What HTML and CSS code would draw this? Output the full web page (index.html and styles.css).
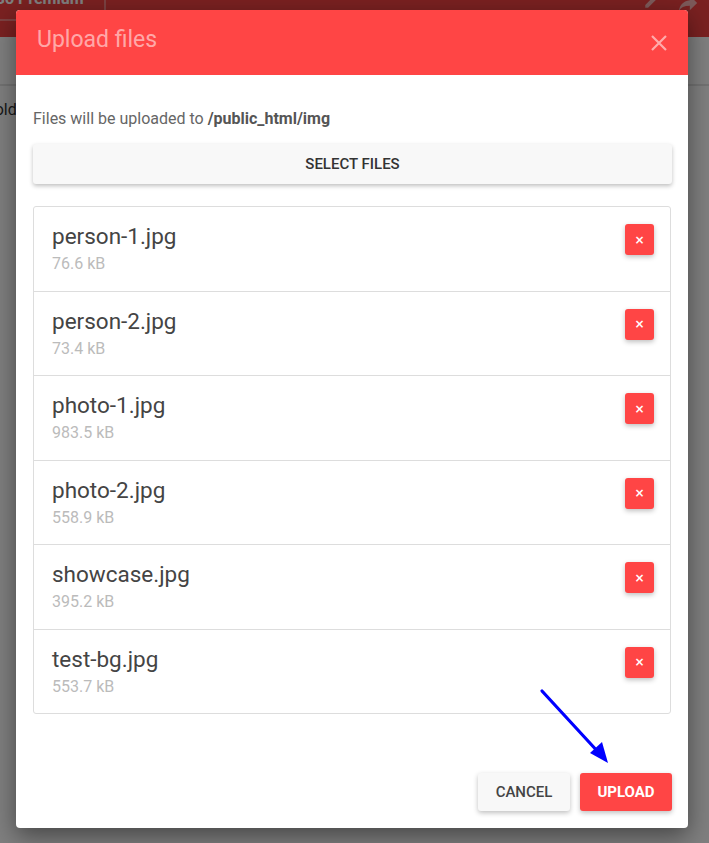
FILE: index.html
```html
<!DOCTYPE html>
<html>
<head>
<meta charset="utf-8">
<link rel="stylesheet" href="styles.css">
</head>
<body>
<div class="page">
  <div class="topbar">
    <div class="brand">Go Premium</div>
    <div class="top-icons">
      <svg width="18" height="18" viewBox="0 0 24 24"><path d="M3 17.25V21h3.75L17.81 9.94l-3.75-3.75L3 17.25zM20.71 7.04a1 1 0 0 0 0-1.41l-2.34-2.34a1 1 0 0 0-1.41 0l-1.83 1.83 3.75 3.75 1.83-1.83z" fill="#fff"/></svg>
      <svg width="26" height="22" viewBox="0 0 24 24"><path d="M14 4l8 8-8 8v-5c-6 0-10 2-12 6 1-6 4-11 12-12V4z" fill="#fff"/></svg>
    </div>
  </div>
  <div class="subbar"></div>
  <div class="content">
    <div class="folder">Folder</div>
  </div>
</div>

<div class="overlay">
  <div class="modal">
    <div class="modal-header">
      <div class="modal-title">Upload files</div>
      <svg class="close" width="18" height="18" viewBox="0 0 18 18"><path d="M2 2L16 16M16 2L2 16" stroke="rgba(255,255,255,0.55)" stroke-width="2.2" fill="none"/></svg>
    </div>
    <div class="modal-body">
      <p class="dest">Files will be uploaded to <b>/public_html/img</b></p>
      <button class="select-btn">SELECT FILES</button>
      <ul class="files">
        <li class="file"><div class="info"><div class="name">person-1.jpg</div><div class="size">76.6 kB</div></div><button class="remove">×</button></li>
        <li class="file"><div class="info"><div class="name">person-2.jpg</div><div class="size">73.4 kB</div></div><button class="remove">×</button></li>
        <li class="file"><div class="info"><div class="name">photo-1.jpg</div><div class="size">983.5 kB</div></div><button class="remove">×</button></li>
        <li class="file"><div class="info"><div class="name">photo-2.jpg</div><div class="size">558.9 kB</div></div><button class="remove">×</button></li>
        <li class="file"><div class="info"><div class="name">showcase.jpg</div><div class="size">395.2 kB</div></div><button class="remove">×</button></li>
        <li class="file"><div class="info"><div class="name">test-bg.jpg</div><div class="size">553.7 kB</div></div><button class="remove">×</button></li>
      </ul>
      <div class="footer">
        <button class="btn cancel">CANCEL</button>
        <button class="btn upload">UPLOAD</button>
      </div>
    </div>
  </div>
  <svg class="arrow" width="709" height="843" viewBox="0 0 709 843">
    <line x1="542" y1="691" x2="600" y2="754" stroke="#0000ff" stroke-width="3.2" stroke-linecap="round"/>
    <polygon points="608,763 590,753 602,742" fill="#0000ff"/>
  </svg>
</div>
</body>
</html>
```

FILE: styles.css
```css
html, body {
  margin: 0;
  padding: 0;
}
body {
  width: 709px;
  height: 843px;
  overflow: hidden;
  font-family: Roboto, "Liberation Sans", sans-serif;
  background: #fff;
  position: relative;
}
.page {
  display: flex;
  flex-direction: column;
  height: 843px;
}
.topbar {
  height: 37px;
  background: #f44343;
  display: flex;
  justify-content: space-between;
  align-items: flex-start;
}
.brand {
  margin-top: -12px;
  margin-left: -6px;
  width: 112px;
  height: 33px;
  border-right: 2px solid rgba(255,255,255,0.35);
  border-bottom: 2px solid rgba(255,255,255,0.35);
  color: #fff;
  font-weight: 700;
  font-size: 16px;
  line-height: 22px;
  box-sizing: border-box;
}
.top-icons {
  display: flex;
  gap: 14px;
  margin-top: -8px;
  margin-right: 8px;
  opacity: 0.6;
}
.subbar {
  height: 47px;
  border-bottom: 2px solid #e4e4e4;
}
.content {
  padding: 14px 0 0 0;
}
.folder {
  margin-left: -14px;
  font-size: 16px;
  color: #333;
}
.overlay {
  position: absolute;
  left: 0;
  top: 0;
  width: 709px;
  height: 843px;
  background: rgba(0,0,0,0.5);
}
.modal {
  position: absolute;
  left: 16px;
  top: 10px;
  width: 672px;
  height: 818px;
  background: #fff;
  border-radius: 4px;
  overflow: hidden;
  box-shadow: 0 8px 24px rgba(0,0,0,0.45);
  display: flex;
  flex-direction: column;
}
.modal-header {
  height: 65px;
  background: #ff4545;
  display: flex;
  align-items: center;
  justify-content: space-between;
  padding: 0 20px 0 21px;
  flex-shrink: 0;
}
.modal-title {
  color: rgba(255,255,255,0.55);
  font-size: 23px;
  margin-top: -7px;
}
.modal-body {
  padding: 0 16px 0 17px;
  display: flex;
  flex-direction: column;
}
.dest {
  margin: 34px 0 0 0;
  font-size: 16px;
  line-height: 20px;
  color: #666;
}
.dest b {
  color: #555;
  font-weight: 700;
}
.select-btn {
  margin-top: 15px;
  height: 40px;
  border: none;
  background: #f8f8f8;
  border-radius: 3px;
  box-shadow: 0 2px 4px rgba(0,0,0,0.25);
  font-family: Roboto, "Liberation Sans", sans-serif;
  font-size: 15px;
  font-weight: 500;
  color: #333;
}
.files {
  list-style: none;
  margin: 22px 0 0 0;
  padding: 0;
  border: 1px solid #ddd;
  border-radius: 3px;
  width: 636px;
}
.file {
  display: flex;
  justify-content: space-between;
  align-items: flex-start;
  padding: 16px 16px 16.5px 18px;
  border-bottom: 1px solid #ddd;
}
.file:last-child {
  border-bottom: none;
}
.name {
  font-size: 22.5px;
  line-height: 26px;
  color: #444;
}
.size {
  margin-top: 5px;
  font-size: 16px;
  line-height: 20px;
  color: #bbb;
}
.remove {
  width: 29px;
  height: 31px;
  margin-top: 1px;
  border: none;
  border-radius: 3px;
  background: #ff4545;
  color: #fff;
  font-family: "DejaVu Sans", sans-serif;
  font-weight: 700;
  font-size: 12px;
  line-height: 1;
  padding: 0;
  box-shadow: 0 2px 5px rgba(0,0,0,0.25);
}
.footer {
  display: flex;
  justify-content: flex-end;
  gap: 10px;
  margin-top: 59px;
}
.btn {
  width: 92px;
  height: 38px;
  border: none;
  border-radius: 3px;
  font-family: Roboto, "Liberation Sans", sans-serif;
  font-size: 15px;
  font-weight: 500;
  box-shadow: 0 2px 5px rgba(0,0,0,0.25);
}
.cancel {
  background: #f8f8f8;
  color: #444;
}
.upload {
  background: #ff4545;
  color: #fff;
  font-weight: 700;
}
.arrow {
  position: absolute;
  left: 0;
  top: 0;
}
```
